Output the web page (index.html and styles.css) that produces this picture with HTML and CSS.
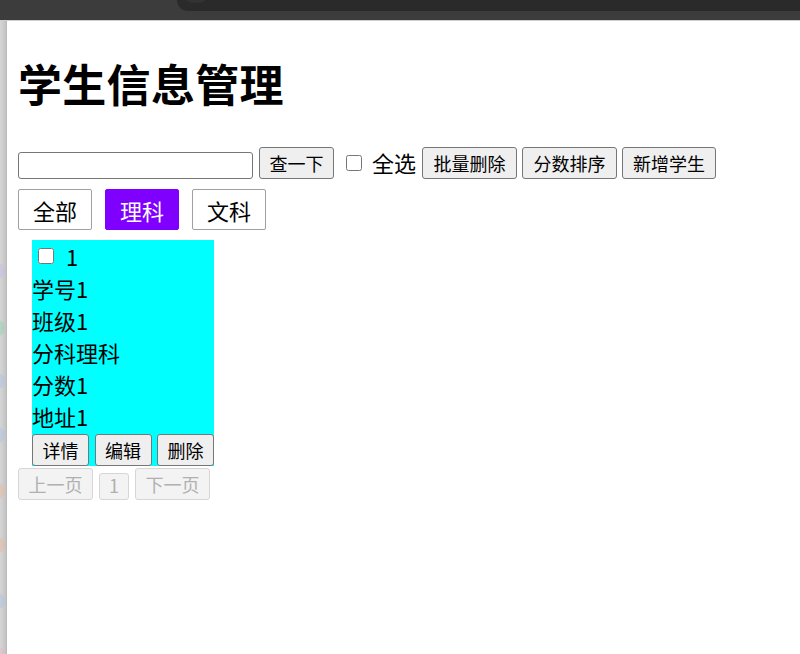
FILE: index.html
```html
<!DOCTYPE html>
<html lang="zh-CN">
<head>
<meta charset="utf-8">
<title>学生信息管理</title>
<link rel="stylesheet" href="styles.css">
</head>
<body>
<div class="topbar">
  <div class="tabstrip"><span class="tab-dot"></span></div>
</div>
<div class="frame">
  <aside class="side">
    <span class="dot dot-purple" style="top:242px"></span>
    <span class="dot dot-green" style="top:299px"></span>
    <span class="dot dot-blue" style="top:352px"></span>
    <span class="dot dot-blue" style="top:406px"></span>
    <span class="dot dot-orange" style="top:462px"></span>
    <span class="dot dot-orange" style="top:516px"></span>
    <span class="dot dot-blue" style="top:572px"></span>
    <span class="dot dot-pink" style="top:626px"></span>
  </aside>
  <main class="page">
    <h1 class="title">学生信息管理</h1>

    <div class="toolbar">
      <input class="search" type="text">
      <button class="btn btn-search">查一下</button>
      <label class="select-all"><input class="check" type="checkbox"><span>全选</span></label>
      <button class="btn">批量删除</button>
      <button class="btn">分数排序</button>
      <button class="btn">新增学生</button>
    </div>

    <div class="filters">
      <button class="filter">全部</button>
      <button class="filter filter-active">理科</button>
      <button class="filter">文科</button>
    </div>

    <div class="card">
      <div class="card-row card-head"><input class="check" type="checkbox"><span>1</span></div>
      <div class="card-row">学号1</div>
      <div class="card-row">班级1</div>
      <div class="card-row">分科理科</div>
      <div class="card-row">分数1</div>
      <div class="card-row">地址1</div>
      <div class="card-actions">
        <button class="btn btn-small">详情</button>
        <button class="btn btn-small">编辑</button>
        <button class="btn btn-small">删除</button>
      </div>
    </div>

    <div class="pager">
      <button class="btn btn-page" disabled>上一页</button>
      <button class="btn btn-page btn-num" disabled>1</button>
      <button class="btn btn-page" disabled>下一页</button>
    </div>
  </main>
</div>
</body>
</html>
```

FILE: styles.css
```css
* { box-sizing: border-box; }

html, body {
  margin: 0;
  padding: 0;
  background: #ffffff;
  height: 100%;
  overflow: hidden;
}

body {
  font-family: "Noto Sans CJK SC", "Noto Sans", sans-serif;
  color: #000;
}

/* dark window bar along the top */
.topbar {
  height: 21px;
  background: #3c3c3c;
  border-bottom: 1px solid #cfcfcf;
  position: relative;
  overflow: hidden;
}
.tabstrip {
  position: absolute;
  left: 177px;
  right: 0;
  top: 0;
  height: 11px;
  background: #2a2a2a;
  border-bottom-left-radius: 12px;
}
.tab-dot {
  position: absolute;
  left: 6px;
  top: -12px;
  width: 26px;
  height: 15px;
  border-radius: 50%;
  background: #333333;
}

.frame {
  display: flex;
  height: calc(100% - 21px);
}

/* narrow grey strip on the left edge */
.side {
  width: 7px;
  flex: none;
  position: relative;
  background: linear-gradient(to right, #d6d6d6, #c4c4c4 80%, #b4b4b4);
  overflow: hidden;
}
.dot {
  position: absolute;
  left: -11px;
  width: 16px;
  height: 16px;
  border-radius: 50%;
  opacity: 0.45;
}
.dot-purple { background: #c9b8e8; }
.dot-green { background: #8fd3b0; }
.dot-blue { background: #a9c3e6; }
.dot-orange { background: #eab898; }
.dot-pink { background: #eab3c8; }

.page {
  flex: 1;
  padding: 0 11px;
}

.title {
  margin: 30px 0 32px;
  font-size: 44px;
  line-height: 64px;
  font-weight: 700;
  letter-spacing: 0.3px;
}

.btn {
  font-family: inherit;
  font-size: 18px;
  line-height: 26px;
  height: 32px;
  padding: 0 9px;
  color: #000;
  background: #efefef;
  border: 1px solid #767676;
  border-radius: 3px;
}

.toolbar {
  display: flex;
  align-items: flex-end;
  height: 32px;
}
.search {
  width: 235px;
  height: 27px;
  margin: 0 6px 0 0;
  border: 1px solid #767676;
  border-radius: 3px;
  font-size: 18px;
  padding: 0 3px;
}
.btn-search { width: 75px; }
.select-all {
  display: flex;
  align-items: center;
  height: 32px;
  margin: 0 6px 0 12px;
  font-size: 22px;
}
.select-all span { margin-left: 10px; position: relative; top: -1px; }
.check {
  width: 16px;
  height: 16px;
  margin: 0;
}
.toolbar .btn + .btn { margin-left: 5px; }
.toolbar .btn:not(.btn-search) { width: 95px; }
.toolbar .btn:last-child { width: 94px; }

.filters {
  display: flex;
  gap: 13px;
  margin-top: 10px;
}
.filter {
  width: 74px;
  height: 41px;
  padding: 0;
  font-family: inherit;
  font-size: 22px;
  color: #000;
  background: #fff;
  border: 1px solid #a0a0a0;
  border-radius: 2px;
}
.filter-active {
  background: #8000ff;
  border-color: #8000ff;
  color: #fff;
}

.card {
  margin: 10px 0 0 14px;
  width: 182px;
  background: #00ffff;
  font-size: 22px;
}
.card-row {
  height: 32px;
  line-height: 32px;
}
.card-head {
  display: flex;
  align-items: center;
}
.card-head .check { margin-left: 6px; }
.card-head span { margin-left: 12px; }
.card-actions {
  display: flex;
  justify-content: space-between;
  margin-top: 2px;
}
.btn-small { width: 57px; padding: 0; }

.pager {
  display: flex;
  align-items: flex-end;
  gap: 6px;
  margin-top: 2px;
}
.btn-page {
  width: 75px;
  padding: 0;
  color: #b0b0b0;
  background: #f3f3f3;
  border-color: #d6d6d6;
}
.btn-num {
  width: 30px;
  height: 27px;
  line-height: 20px;
  padding-bottom: 4px;
}
```
